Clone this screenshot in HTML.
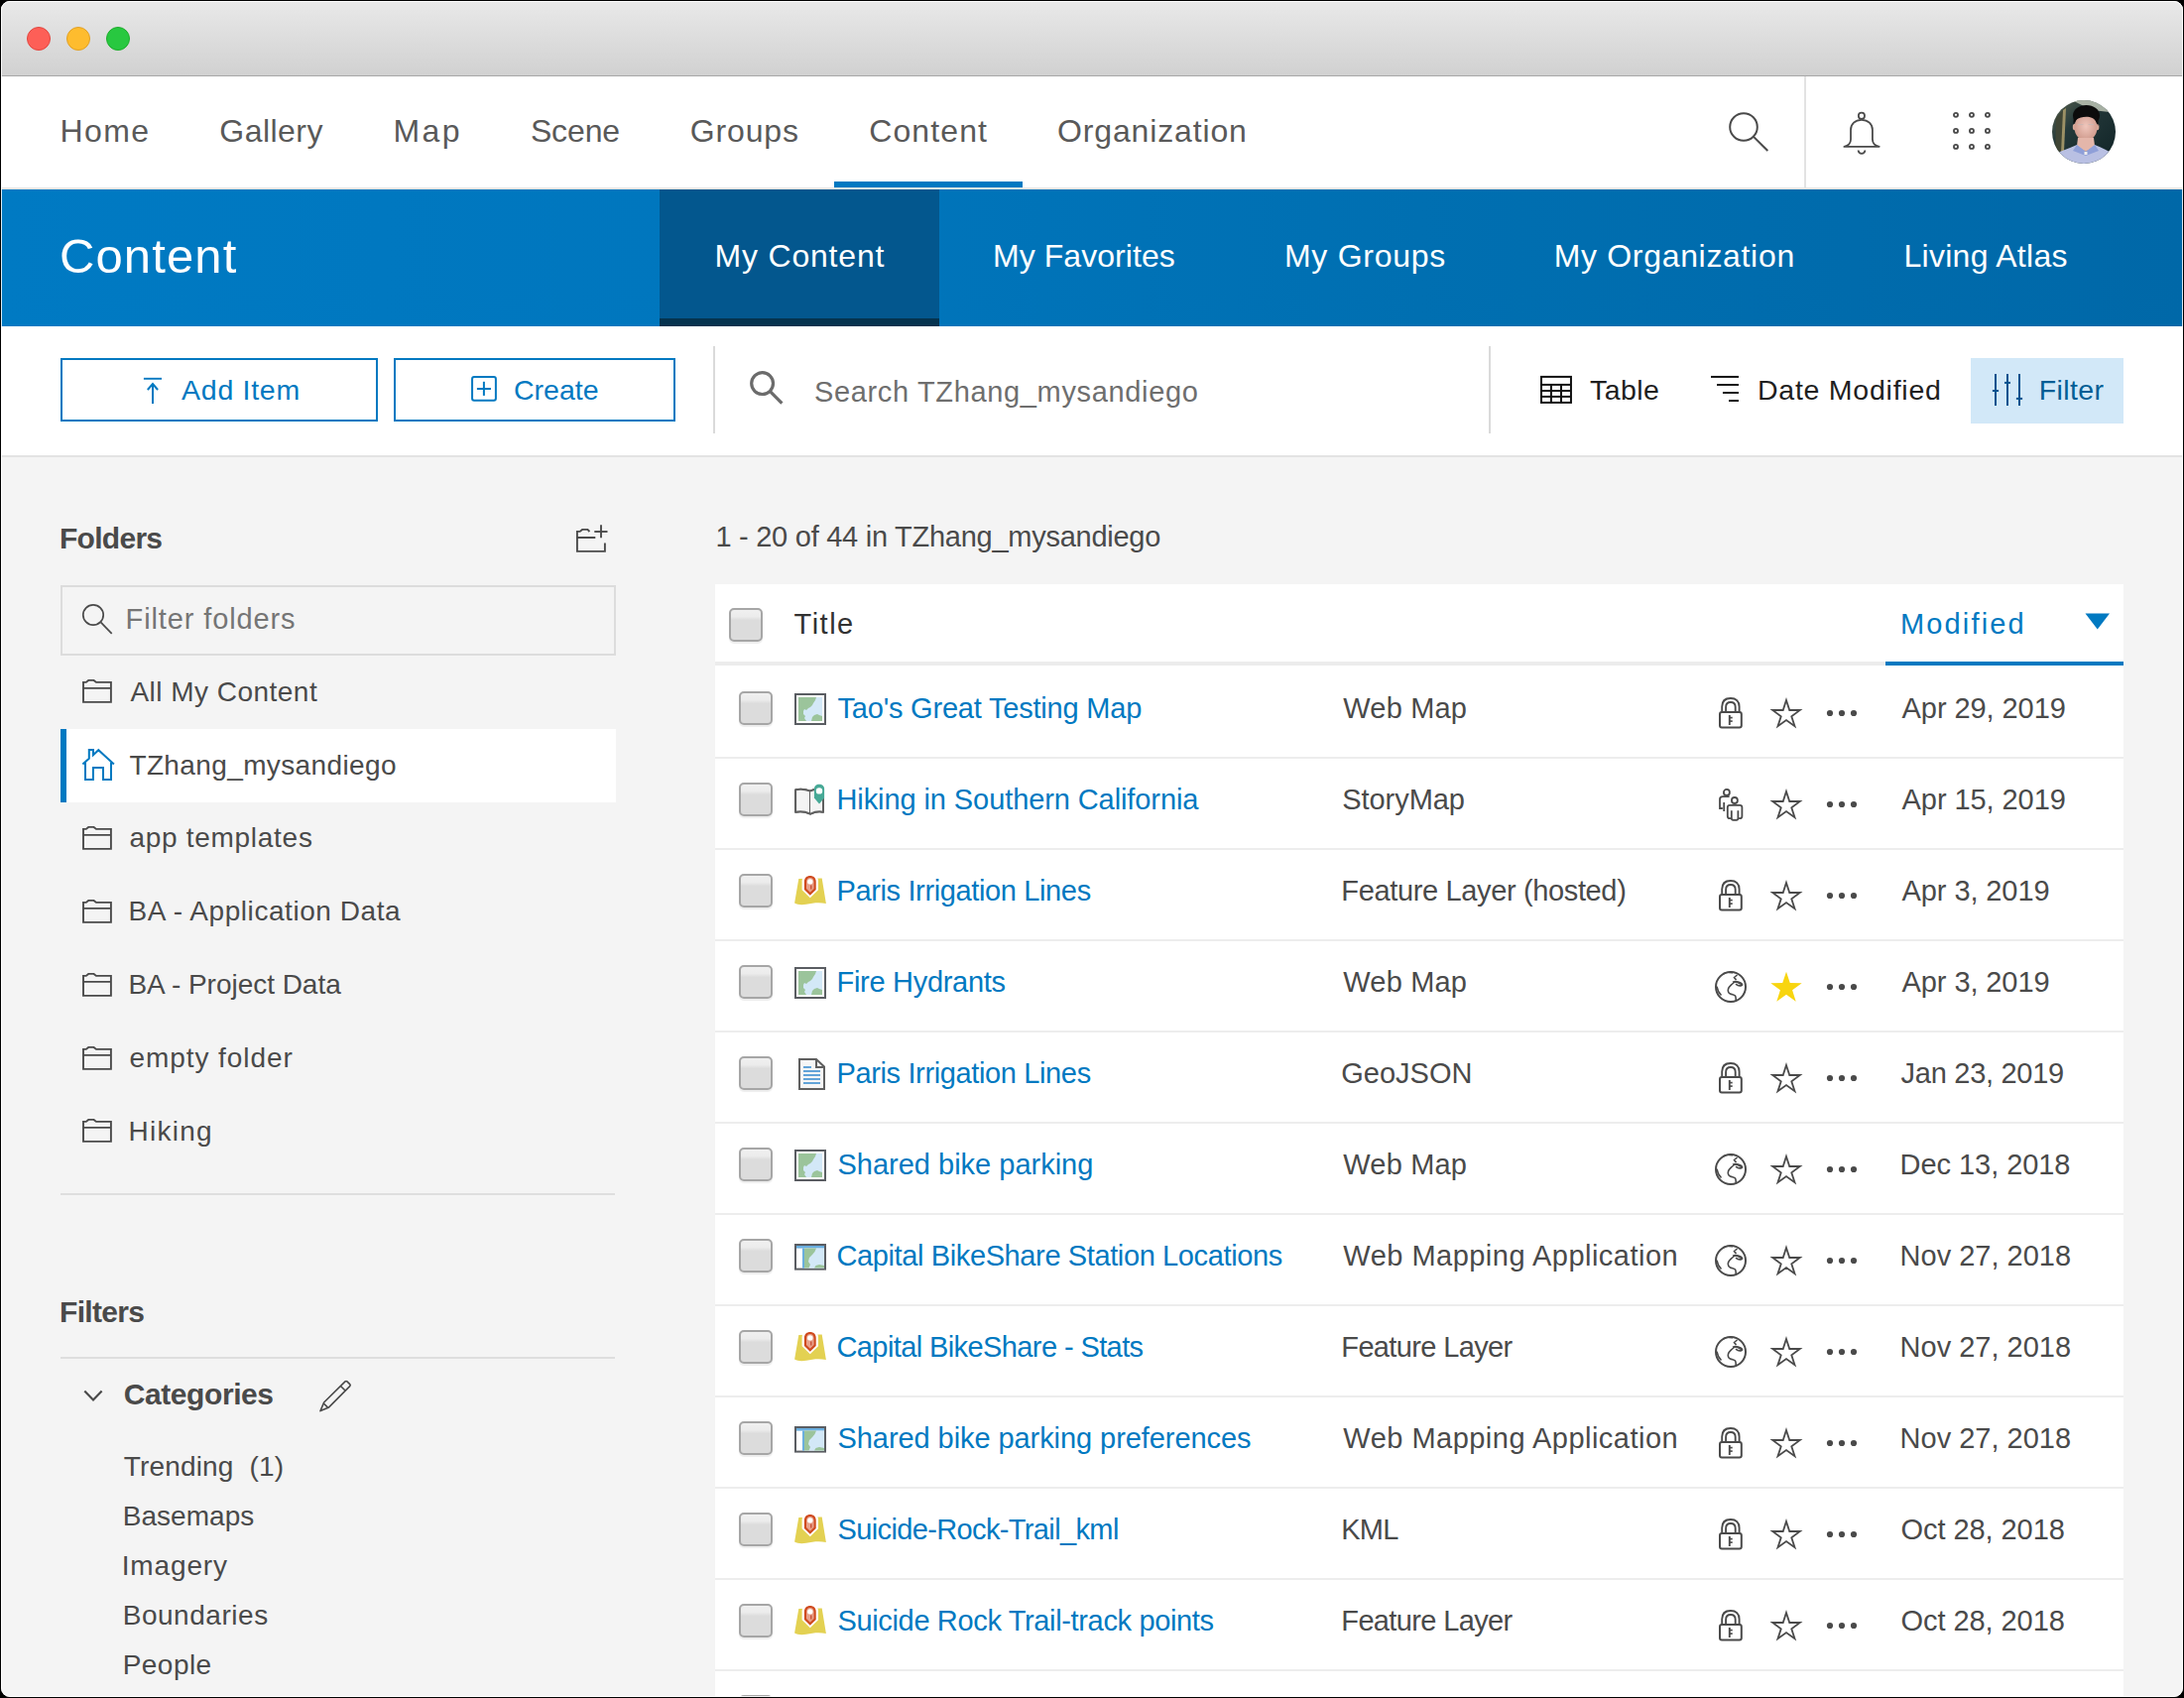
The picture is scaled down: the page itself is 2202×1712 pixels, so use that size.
<!DOCTYPE html>
<html><head><meta charset='utf-8'><style>
html,body{margin:0;padding:0;width:2202px;height:1712px;overflow:hidden;background:#000}
#win{position:absolute;left:1px;top:1px;width:2200px;height:1710px;border-radius:9px;overflow:hidden;background:#f4f4f4}
#c{position:absolute;left:-1px;top:-1px;width:2202px;height:1712px}
.t{position:absolute;font-family:"Liberation Sans", sans-serif;line-height:1;white-space:pre}
.i{position:absolute;overflow:visible}
.cb{position:absolute;width:29.5px;height:29.5px;border:2px solid #a6a6a6;border-radius:5px;background:linear-gradient(#f0f0f0,#ececec 22%,#dcdcdc 34%,#dcdcdc);box-shadow:0 1.5px 1px rgba(0,0,0,0.07)}
</style></head><body>
<div id='win'><div id='c'>
<div style='position:absolute;left:0px;top:0px;width:2202px;height:76px;background:linear-gradient(#e9e9e9,#d1d1d1);'></div><div style='position:absolute;left:0px;top:76px;width:2202px;height:1px;background:#a8a8a8;'></div><div style='position:absolute;left:27px;top:27px;width:22px;height:22px;border-radius:50%;background:#fd5f57;border:1px solid #e2463f'></div><div style='position:absolute;left:67px;top:27px;width:22px;height:22px;border-radius:50%;background:#febc2e;border:1px solid #e1a024'></div><div style='position:absolute;left:107px;top:27px;width:22px;height:22px;border-radius:50%;background:#28c840;border:1px solid #1dad2b'></div><div style='position:absolute;left:0px;top:77px;width:2202px;height:112px;background:#fff;'></div><div style='position:absolute;left:0px;top:189px;width:2202px;height:2px;background:#e8e6e4;'></div><div style='position:absolute;left:841px;top:183px;width:190px;height:6px;background:#0079c1;'></div><div style='position:absolute;left:1819px;top:77px;width:2px;height:112px;background:#e3e3e3;'></div><div style='position:absolute;left:0px;top:191px;width:2202px;height:138px;background:linear-gradient(90deg,#007ac3 0%,#0076bd 35%,#006fb1 65%,#0068a8 100%);'></div><div style='position:absolute;left:665px;top:191px;width:282px;height:130px;background:#03578e;'></div><div style='position:absolute;left:665px;top:321px;width:282px;height:8px;background:#05334f;'></div><div style='position:absolute;left:0px;top:329px;width:2202px;height:130px;background:#fff;'></div><div style='position:absolute;left:0px;top:459px;width:2202px;height:2px;background:#e3e3e3;'></div><div style='position:absolute;left:61px;top:361px;width:316px;height:60px;border:2px solid #0079c1'></div><div style='position:absolute;left:397px;top:361px;width:280px;height:60px;border:2px solid #0079c1'></div><div style='position:absolute;left:719px;top:349px;width:2px;height:88px;background:#dadada;'></div><div style='position:absolute;left:1501px;top:349px;width:2px;height:88px;background:#dadada;'></div><div style='position:absolute;left:61px;top:590px;width:556px;height:67px;border:2px solid #dcdcdc'></div><div style='position:absolute;left:61px;top:735px;width:560px;height:74px;background:#fff;'></div><div style='position:absolute;left:61px;top:735px;width:6px;height:74px;background:#0079c1;'></div><div style='position:absolute;left:61px;top:1203px;width:559px;height:2px;background:#dedede;'></div><div style='position:absolute;left:61px;top:1368px;width:559px;height:2px;background:#dedede;'></div><div style='position:absolute;left:721px;top:589px;width:1420px;height:1130px;background:#fff;'></div><div style='position:absolute;left:721px;top:667px;width:1420px;height:4px;background:#ececec;'></div><div style='position:absolute;left:1901px;top:667px;width:240px;height:4px;background:#0079c1;'></div><div style='position:absolute;left:721px;top:763px;width:1420px;height:2px;background:#ededed;'></div><div style='position:absolute;left:721px;top:855px;width:1420px;height:2px;background:#ededed;'></div><div style='position:absolute;left:721px;top:947px;width:1420px;height:2px;background:#ededed;'></div><div style='position:absolute;left:721px;top:1039px;width:1420px;height:2px;background:#ededed;'></div><div style='position:absolute;left:721px;top:1131px;width:1420px;height:2px;background:#ededed;'></div><div style='position:absolute;left:721px;top:1223px;width:1420px;height:2px;background:#ededed;'></div><div style='position:absolute;left:721px;top:1315px;width:1420px;height:2px;background:#ededed;'></div><div style='position:absolute;left:721px;top:1407px;width:1420px;height:2px;background:#ededed;'></div><div style='position:absolute;left:721px;top:1499px;width:1420px;height:2px;background:#ededed;'></div><div style='position:absolute;left:721px;top:1591px;width:1420px;height:2px;background:#ededed;'></div><div style='position:absolute;left:721px;top:1683px;width:1420px;height:2px;background:#ededed;'></div>
<svg class='i' style='left:1730px;top:100px' width='60' height='60' viewBox='0 0 60 60'><circle cx='28' cy='28' r='13.8' fill='none' stroke='#4a4a4a' stroke-width='2'/><line x1='37.8' y1='37.6' x2='52.3' y2='52' stroke='#4a4a4a' stroke-width='2'/></svg><svg class='i' style='left:1850px;top:105px' width='55' height='55' viewBox='0 0 55 55'><circle cx='26.9' cy='11.7' r='3.1' fill='none' stroke='#4a4a4a' stroke-width='1.8'/><path d='M9.4 42.9 C12.5 42.2 16 40 16 35.6 V25.9 C16 20 20.5 15.9 26.9 15.9 C33.3 15.9 37.9 20 37.9 25.9 V35.6 C37.9 40 41.5 42.2 44.7 42.9 Z' fill='none' stroke='#4a4a4a' stroke-width='1.8' stroke-linejoin='round'/><path d='M23.6 46.4 A3.4 3.4 0 0 0 30.4 46.4' fill='none' stroke='#4a4a4a' stroke-width='1.8'/></svg><svg class='i' style='left:1960px;top:105px' width='55' height='55' viewBox='0 0 55 55'><circle cx='12' cy='10.85' r='2.05' fill='none' stroke='#4a4a4a' stroke-width='1.8'/><circle cx='12' cy='26.9' r='2.05' fill='none' stroke='#4a4a4a' stroke-width='1.8'/><circle cx='12' cy='42.9' r='2.05' fill='none' stroke='#4a4a4a' stroke-width='1.8'/><circle cx='27.95' cy='10.85' r='2.05' fill='none' stroke='#4a4a4a' stroke-width='1.8'/><circle cx='27.95' cy='26.9' r='2.05' fill='none' stroke='#4a4a4a' stroke-width='1.8'/><circle cx='27.95' cy='42.9' r='2.05' fill='none' stroke='#4a4a4a' stroke-width='1.8'/><circle cx='43.95' cy='10.85' r='2.05' fill='none' stroke='#4a4a4a' stroke-width='1.8'/><circle cx='43.95' cy='26.9' r='2.05' fill='none' stroke='#4a4a4a' stroke-width='1.8'/><circle cx='43.95' cy='42.9' r='2.05' fill='none' stroke='#4a4a4a' stroke-width='1.8'/></svg><svg class='i' style='left:2069px;top:101px' width='64' height='64' viewBox='0 0 64 64'><defs><clipPath id='av'><circle cx='32' cy='32' r='32'/></clipPath><linearGradient id='avbg' x1='0' y1='0' x2='1' y2='1'><stop offset='0' stop-color='#5d6450'/><stop offset='0.35' stop-color='#24393a'/><stop offset='1' stop-color='#102226'/></linearGradient><radialGradient id='avf' cx='0.5' cy='0.45' r='0.55'><stop offset='0' stop-color='#f0c7bd'/><stop offset='1' stop-color='#cf9a8c'/></radialGradient></defs><g clip-path='url(#av)'><rect width='64' height='64' fill='url(#avbg)'/><path d='M20 0 H52 L58 12 L40 10 Z' fill='#c9cfbf' opacity='0.8'/><path d='M4 18 L13 8 L11 50 L3 56 Z' fill='#3f4535'/><path d='M11 10 L14 8 L12 52 L9 54 Z' fill='#9c9166'/><ellipse cx='34.5' cy='15.5' rx='13.5' ry='10.5' fill='#0c0c0c'/><ellipse cx='22.6' cy='27' rx='1.8' ry='3.2' fill='#d9a898'/><ellipse cx='45.6' cy='27' rx='1.8' ry='3.2' fill='#d9a898'/><ellipse cx='34' cy='27.5' rx='11.5' ry='13.5' fill='url(#avf)'/><path d='M21.5 25 C21 12 27 6 35 6.5 C43 7 47.5 13 46.5 26 L44.5 22 C42 16 31 15 24 20 Z' fill='#0c0c0c'/><path d='M26 24.5 H31.5 M36.5 24.5 H42' stroke='#c9b8b4' stroke-width='1' opacity='0.8'/><path d='M26 38 H42 L43 46 L34 52 L25 46 Z' fill='#e4b6aa'/><path d='M-2 64 L-2 57 C6 52 16 49 25 45 L34 52 L43 45 C51 48 58 52 66 57 V64 Z' fill='#b9c0e3'/><path d='M25 45 L21 51 L34 56 L47 51 L43 45 L34 52 Z' fill='#8f9fd8'/><rect x='32.5' y='52' width='3' height='3' fill='#eee'/></g></svg><svg class='i' style='left:130px;top:360px' width='40' height='60' viewBox='0 0 40 60'><line x1='14.9' y1='21.8' x2='33' y2='21.8' stroke='#0079c1' stroke-width='1.9'/><line x1='24' y1='28' x2='24' y2='47' stroke='#0079c1' stroke-width='2'/><path d='M18.8 33 L24 27 L29.1 33' fill='none' stroke='#0079c1' stroke-width='2'/></svg><svg class='i' style='left:465px;top:370px' width='45' height='45' viewBox='0 0 45 45'><rect x='11.07' y='10' width='23.83' height='23.85' rx='2' fill='none' stroke='#0079c1' stroke-width='2'/><line x1='22.9' y1='14.8' x2='22.9' y2='28.9' stroke='#0079c1' stroke-width='2'/><line x1='15.9' y1='22' x2='29.95' y2='22' stroke='#0079c1' stroke-width='2'/></svg><svg class='i' style='left:745px;top:365px' width='55' height='50' viewBox='0 0 55 50'><circle cx='23.6' cy='21.6' r='10.9' fill='none' stroke='#6b6b6b' stroke-width='3.2'/><line x1='31.5' y1='29.6' x2='43.4' y2='41.6' stroke='#6b6b6b' stroke-width='3.2'/></svg><svg class='i' style='left:1545px;top:370px' width='50' height='45' viewBox='0 0 50 45'><rect x='9' y='9.9' width='29.95' height='26' fill='none' stroke='#111' stroke-width='2'/><line x1='9' y1='17.9' x2='38.95' y2='17.9' stroke='#111' stroke-width='2'/><line x1='9' y1='24' x2='38.95' y2='24' stroke='#111' stroke-width='2'/><line x1='9' y1='29.9' x2='38.95' y2='29.9' stroke='#111' stroke-width='2'/><line x1='18.9' y1='17.9' x2='18.9' y2='35.9' stroke='#111' stroke-width='2'/><line x1='29' y1='17.9' x2='29' y2='35.9' stroke='#111' stroke-width='2'/></svg><svg class='i' style='left:1718px;top:370px' width='45' height='45' viewBox='0 0 45 45'><line x1='7' y1='9.94' x2='35' y2='9.94' stroke='#111' stroke-width='2'/><line x1='13' y1='17.97' x2='35' y2='17.97' stroke='#111' stroke-width='2'/><line x1='18.95' y1='25.97' x2='35' y2='25.97' stroke='#111' stroke-width='2'/><line x1='25' y1='33.98' x2='35' y2='33.98' stroke='#111' stroke-width='2'/></svg><div style='position:absolute;left:1987px;top:361px;width:154px;height:66px;background:#d2e8f8;'></div><svg class='i' style='left:2000px;top:370px' width='45' height='45' viewBox='0 0 45 45'><line x1='12' y1='7' x2='12' y2='39' stroke='#00528e' stroke-width='2'/><line x1='24' y1='7' x2='24' y2='39' stroke='#00528e' stroke-width='2'/><line x1='36' y1='7' x2='36' y2='39' stroke='#00528e' stroke-width='2'/><line x1='8.9' y1='24' x2='15.1' y2='24' stroke='#00528e' stroke-width='2'/><line x1='21' y1='15.9' x2='27' y2='15.9' stroke='#00528e' stroke-width='2'/><line x1='32.9' y1='31.9' x2='39.1' y2='31.9' stroke='#00528e' stroke-width='2'/></svg><svg class='i' style='left:572px;top:522px' width='48' height='40' viewBox='0 0 48 40'><path d='M9.9 20 H28.3 M37.9 25.5 V33.9 H9.9 V13.9 H12.7 L15.07 11.9 H20.5 L22.4 14' fill='none' stroke='#4a4a4a' stroke-width='1.9'/><line x1='34' y1='7.3' x2='34' y2='20.25' stroke='#4a4a4a' stroke-width='1.9'/><line x1='27.3' y1='14' x2='40.5' y2='14' stroke='#4a4a4a' stroke-width='1.9'/></svg><svg class='i' style='left:78px;top:600px' width='42' height='45' viewBox='0 0 42 45'><circle cx='16' cy='20' r='10.2' fill='none' stroke='#4a4a4a' stroke-width='1.7'/><line x1='23.6' y1='27.4' x2='34.7' y2='38.95' stroke='#4a4a4a' stroke-width='1.7'/></svg><svg class='i' style='left:76px;top:676.0px' width='48' height='40' viewBox='0 0 48 40'><path d='M8 31.9 V11.9 H10.8 L13.2 9.9 H18.6 L21 11.9 H35.9 V31.9 Z M8 17.9 H35.9' fill='none' stroke='#4a4a4a' stroke-width='1.9'/></svg><svg class='i' style='left:76px;top:823.8px' width='48' height='40' viewBox='0 0 48 40'><path d='M8 31.9 V11.9 H10.8 L13.2 9.9 H18.6 L21 11.9 H35.9 V31.9 Z M8 17.9 H35.9' fill='none' stroke='#4a4a4a' stroke-width='1.9'/></svg><svg class='i' style='left:76px;top:897.7px' width='48' height='40' viewBox='0 0 48 40'><path d='M8 31.9 V11.9 H10.8 L13.2 9.9 H18.6 L21 11.9 H35.9 V31.9 Z M8 17.9 H35.9' fill='none' stroke='#4a4a4a' stroke-width='1.9'/></svg><svg class='i' style='left:76px;top:971.6px' width='48' height='40' viewBox='0 0 48 40'><path d='M8 31.9 V11.9 H10.8 L13.2 9.9 H18.6 L21 11.9 H35.9 V31.9 Z M8 17.9 H35.9' fill='none' stroke='#4a4a4a' stroke-width='1.9'/></svg><svg class='i' style='left:76px;top:1045.5px' width='48' height='40' viewBox='0 0 48 40'><path d='M8 31.9 V11.9 H10.8 L13.2 9.9 H18.6 L21 11.9 H35.9 V31.9 Z M8 17.9 H35.9' fill='none' stroke='#4a4a4a' stroke-width='1.9'/></svg><svg class='i' style='left:76px;top:1119.4px' width='48' height='40' viewBox='0 0 48 40'><path d='M8 31.9 V11.9 H10.8 L13.2 9.9 H18.6 L21 11.9 H35.9 V31.9 Z M8 17.9 H35.9' fill='none' stroke='#4a4a4a' stroke-width='1.9'/></svg><svg class='i' style='left:76px;top:746px' width='48' height='50' viewBox='0 0 48 50'><path d='M7.4 24.6 L13.8 18.8 V10 H18 V15.2 L23.3 10.2 L38.9 24.6' fill='none' stroke='#0079c1' stroke-width='2' stroke-linejoin='miter'/><path d='M10 22.6 V39.9 H17.9 V28.1 H28 V39.9 H36 V22.6' fill='none' stroke='#0079c1' stroke-width='2'/></svg><svg class='i' style='left:78px;top:1390px' width='35' height='35' viewBox='0 0 35 35'><path d='M7.3 12.6 L16 21.5 L24.6 12.6' fill='none' stroke='#4a4a4a' stroke-width='2.2'/></svg><svg class='i' style='left:310px;top:1385px' width='50' height='45' viewBox='0 0 50 45'><path d='M13 37.6 L16.6 29 L38 7.9 C38.6 7.3 39.4 7.3 40 7.9 L42.7 10.6 C43.3 11.2 43.3 12 42.7 12.6 L21.6 33.9 Z M33.5 12.5 L38.3 17.3 M16.6 30.2 L20.3 33.9' fill='none' stroke='#4a4a4a' stroke-width='1.6' stroke-linejoin='round'/></svg><svg class='i' style='left:2095px;top:612px' width='40' height='30' viewBox='0 0 40 30'><path d='M7.5 6.4 H32 L19.75 22.5 Z' fill='#0079c1'/></svg><div class='cb' style='left:735px;top:613px'></div><div class='cb' style='left:745px;top:697px'></div><svg class='i' style='left:801px;top:699px' width='32' height='32' viewBox='0 0 32 32'><rect x='1' y='1' width='30' height='30' fill='#fff' stroke='#5a5d62' stroke-width='2'/><rect x='4' y='4' width='24' height='24' fill='#d3e8f7'/><path d='M4 4 H22 L21 7 L19 10 L18 12 L16 14 L14 15 L12 17 L10 16 L9 18 L9 21 L11 23 L10 25 L12 28 H4 Z' fill='#9bc49b'/><path d='M17 28 L18 24 L20 22 L23 21 L25 22 L28 23 V28 Z' fill='#9bc49b'/></svg><svg class='i' style='left:1733px;top:703px' width='26' height='33' viewBox='0 0 26 33'><rect x='1' y='15' width='21.8' height='15.6' rx='2' fill='none' stroke='#4a4a4a' stroke-width='2'/><path d='M3.2 15 V9.5 C3.2 4 6.6 1 11.9 1 C17.2 1 20.6 4 20.6 9.5 V15 M7.1 15 V10 C7.1 6.8 9.2 5 11.9 5 C14.6 5 16.7 6.8 16.7 10 V15' fill='none' stroke='#4a4a4a' stroke-width='1.9'/><line x1='10.8' y1='18' x2='10.8' y2='28' stroke='#4a4a4a' stroke-width='1.9'/><line x1='10.8' y1='20.6' x2='13.7' y2='20.6' stroke='#4a4a4a' stroke-width='1.7'/><line x1='10.8' y1='24.1' x2='13.7' y2='24.1' stroke='#4a4a4a' stroke-width='1.7'/></svg><svg class='i' style='left:1785px;top:703px' width='33' height='33' viewBox='0 0 33 33'><path d='M16.00 3.00 L19.26 13.01 L29.79 13.02 L21.28 19.22 L24.52 29.23 L16.00 23.05 L7.48 29.23 L10.72 19.22 L2.21 13.02 L12.74 13.01 Z' fill='none' stroke='#4a4a4a' stroke-width='1.8' stroke-linejoin='miter' stroke-miterlimit='10'/></svg><svg class='i' style='left:1838px;top:711px' width='40' height='10' viewBox='0 0 40 10'><circle cx='7' cy='8' r='3.1' fill='#4a4a4a'/><circle cx='19' cy='8' r='3.1' fill='#4a4a4a'/><circle cx='31' cy='8' r='3.1' fill='#4a4a4a'/></svg><div class='cb' style='left:745px;top:789px'></div><svg class='i' style='left:801px;top:789px' width='32' height='36' viewBox='0 0 32 36'><path d='M1.1 7.2 C6 6.2 11.5 6.8 16 8.6 C18 7.6 19.5 7.2 20.5 7 M29 17 V29.8 C25 28.6 20.5 29.5 16 31.6 C11.5 29.5 6 28.6 1.1 29.8 Z M1.1 7.2 V29.8' fill='#f4f4f4' stroke='#5f5f5f' stroke-width='2' stroke-linejoin='round'/><path d='M1.1 7.2 C6 6.2 11.5 6.8 16 8.6 V31.6 C11.5 29.5 6 28.6 1.1 29.8 Z' fill='#f4f4f4' stroke='#5f5f5f' stroke-width='2' stroke-linejoin='round'/><path d='M16 8.6 C18 7.6 19.5 7.2 21 7 V16 H29 V29.8 C25 28.6 20.5 29.5 16 31.6 Z' fill='#f4f4f4' stroke='none'/><path d='M16 8.6 C18 7.6 19.5 7.2 21 7 M29 16 V29.8 C25 28.6 20.5 29.5 16 31.6' fill='none' stroke='#5f5f5f' stroke-width='2' stroke-linejoin='round'/><path d='M25 21.5 L19.9 15.5 V6.5 C19.9 3.5 22 1.7 25 1.7 C28 1.7 30.1 3.5 30.1 6.5 V15.5 Z' fill='#47a996'/><circle cx='25' cy='8.4' r='3.2' fill='#fff'/></svg><svg class='i' style='left:1733px;top:795px' width='26' height='34' viewBox='0 0 26 34'><circle cx='7.9' cy='3.9' r='3' fill='none' stroke='#4a4a4a' stroke-width='1.8'/><path d='M10.6 8.2 H4 C2.3 8.2 1 9.3 1 11 V20 H3.8 M5.2 14 V23' fill='none' stroke='#4a4a4a' stroke-width='1.8'/><circle cx='15.9' cy='12' r='3' fill='none' stroke='#4a4a4a' stroke-width='1.8'/><path d='M12.6 30.2 H11 C9.8 30.2 8.8 29.2 8.8 28 V19.1 C8.8 17.9 9.8 16.9 11 16.9 H21.2 C22.4 16.9 23.4 17.9 23.4 19.1 V28 C23.4 29.2 22.4 30.2 21.2 30.2 H19.4 M12.8 22.3 V30 C12.8 31 13.5 31.8 14.5 31.8 H17.7 C18.7 31.8 19.4 31 19.4 30 V22.3' fill='none' stroke='#4a4a4a' stroke-width='1.8'/></svg><svg class='i' style='left:1785px;top:795px' width='33' height='33' viewBox='0 0 33 33'><path d='M16.00 3.00 L19.26 13.01 L29.79 13.02 L21.28 19.22 L24.52 29.23 L16.00 23.05 L7.48 29.23 L10.72 19.22 L2.21 13.02 L12.74 13.01 Z' fill='none' stroke='#4a4a4a' stroke-width='1.8' stroke-linejoin='miter' stroke-miterlimit='10'/></svg><svg class='i' style='left:1838px;top:803px' width='40' height='10' viewBox='0 0 40 10'><circle cx='7' cy='8' r='3.1' fill='#4a4a4a'/><circle cx='19' cy='8' r='3.1' fill='#4a4a4a'/><circle cx='31' cy='8' r='3.1' fill='#4a4a4a'/></svg><div class='cb' style='left:745px;top:881px'></div><svg class='i' style='left:801px;top:882px' width='32' height='32' viewBox='0 0 32 32'><path d='M4.3 4 L27.7 3.4 L31.9 28.9 C24 27.6 18 28.6 12 29.8 C7 30.6 3 30.2 0.1 28.6 Z' fill='#e3d152'/><path d='M15.8 23.2 L7.6 15.2 V6.6 C7.6 1.6 11.4 -1.2 15.8 -1.2 C20.2 -1.2 24 1.6 24 6.6 V15.2 Z' fill='#fff'/><path d='M15.8 20.8 L9.9 15 V6.8 C9.9 3 12.5 0.9 15.8 0.9 C19.1 0.9 21.7 3 21.7 6.8 V15 Z' fill='#cf4a1f'/><path d='M15.8 17.8 L12 14 V7.2 C12 4.6 13.6 3 15.8 3 C18 3 19.6 4.6 19.6 7.2 V14 Z' fill='#e8a08a'/><circle cx='15.8' cy='6.9' r='2.7' fill='#fff'/><rect x='16.2' y='10.5' width='1.2' height='4' fill='#c4452a'/></svg><svg class='i' style='left:1733px;top:887px' width='26' height='33' viewBox='0 0 26 33'><rect x='1' y='15' width='21.8' height='15.6' rx='2' fill='none' stroke='#4a4a4a' stroke-width='2'/><path d='M3.2 15 V9.5 C3.2 4 6.6 1 11.9 1 C17.2 1 20.6 4 20.6 9.5 V15 M7.1 15 V10 C7.1 6.8 9.2 5 11.9 5 C14.6 5 16.7 6.8 16.7 10 V15' fill='none' stroke='#4a4a4a' stroke-width='1.9'/><line x1='10.8' y1='18' x2='10.8' y2='28' stroke='#4a4a4a' stroke-width='1.9'/><line x1='10.8' y1='20.6' x2='13.7' y2='20.6' stroke='#4a4a4a' stroke-width='1.7'/><line x1='10.8' y1='24.1' x2='13.7' y2='24.1' stroke='#4a4a4a' stroke-width='1.7'/></svg><svg class='i' style='left:1785px;top:887px' width='33' height='33' viewBox='0 0 33 33'><path d='M16.00 3.00 L19.26 13.01 L29.79 13.02 L21.28 19.22 L24.52 29.23 L16.00 23.05 L7.48 29.23 L10.72 19.22 L2.21 13.02 L12.74 13.01 Z' fill='none' stroke='#4a4a4a' stroke-width='1.8' stroke-linejoin='miter' stroke-miterlimit='10'/></svg><svg class='i' style='left:1838px;top:895px' width='40' height='10' viewBox='0 0 40 10'><circle cx='7' cy='8' r='3.1' fill='#4a4a4a'/><circle cx='19' cy='8' r='3.1' fill='#4a4a4a'/><circle cx='31' cy='8' r='3.1' fill='#4a4a4a'/></svg><div class='cb' style='left:745px;top:973px'></div><svg class='i' style='left:801px;top:975px' width='32' height='32' viewBox='0 0 32 32'><rect x='1' y='1' width='30' height='30' fill='#fff' stroke='#5a5d62' stroke-width='2'/><rect x='4' y='4' width='24' height='24' fill='#d3e8f7'/><path d='M4 4 H22 L21 7 L19 10 L18 12 L16 14 L14 15 L12 17 L10 16 L9 18 L9 21 L11 23 L10 25 L12 28 H4 Z' fill='#9bc49b'/><path d='M17 28 L18 24 L20 22 L23 21 L25 22 L28 23 V28 Z' fill='#9bc49b'/></svg><svg class='i' style='left:1729px;top:979px' width='33' height='33' viewBox='0 0 33 33'><circle cx='16' cy='16' r='15' fill='none' stroke='#4a4a4a' stroke-width='2'/><path d='M22.5 4 L19.5 6.5 L21.5 9 M27 13.5 C25 12.5 23 11 21 11 C19.5 11 18.5 12 17 13.5 C15.5 15 14 16 13.5 18 C13 20 13.5 22 15.5 23 C17.5 24 19.5 23.5 20.5 25 C21.5 26.5 21 28.5 21.3 30.2 M2 15.5 C2.5 19 4 22 6.5 24.5' fill='none' stroke='#4a4a4a' stroke-width='1.6'/><path d='M18 11.2 C20.5 10 23.5 10.5 26 12 C27.8 13 28 14 27 14.5 C25.5 15.2 23 14.8 21 13.2' fill='none' stroke='#4a4a4a' stroke-width='1.6'/><path d='M8 2.8 L11 2 M14.5 1.4 L18 1.6' fill='none' stroke='#4a4a4a' stroke-width='1.6'/></svg><svg class='i' style='left:1785px;top:979px' width='33' height='33' viewBox='0 0 33 33'><path d='M16.00 0.80 L19.76 12.12 L31.69 12.20 L22.09 19.28 L25.70 30.65 L16.00 23.70 L6.30 30.65 L9.91 19.28 L0.31 12.20 L12.24 12.12 Z' fill='#f8d50f'/></svg><svg class='i' style='left:1838px;top:987px' width='40' height='10' viewBox='0 0 40 10'><circle cx='7' cy='8' r='3.1' fill='#4a4a4a'/><circle cx='19' cy='8' r='3.1' fill='#4a4a4a'/><circle cx='31' cy='8' r='3.1' fill='#4a4a4a'/></svg><div class='cb' style='left:745px;top:1065px'></div><svg class='i' style='left:801px;top:1067px' width='32' height='32' viewBox='0 0 32 32'><path d='M5 1 H22 L30 8.5 V31 H5 Z' fill='#f6f6f6' stroke='#5f5f5f' stroke-width='2'/><path d='M22 1 V9 H30' fill='none' stroke='#5f5f5f' stroke-width='2'/><line x1='9' y1='9' x2='17' y2='9' stroke='#3d8fd1' stroke-width='1.6'/><line x1='9' y1='13' x2='26' y2='13' stroke='#3d8fd1' stroke-width='1.6'/><line x1='9' y1='17' x2='26' y2='17' stroke='#3d8fd1' stroke-width='1.6'/><line x1='9' y1='21' x2='26' y2='21' stroke='#3d8fd1' stroke-width='1.6'/><line x1='9' y1='25' x2='26' y2='25' stroke='#3d8fd1' stroke-width='1.6'/></svg><svg class='i' style='left:1733px;top:1071px' width='26' height='33' viewBox='0 0 26 33'><rect x='1' y='15' width='21.8' height='15.6' rx='2' fill='none' stroke='#4a4a4a' stroke-width='2'/><path d='M3.2 15 V9.5 C3.2 4 6.6 1 11.9 1 C17.2 1 20.6 4 20.6 9.5 V15 M7.1 15 V10 C7.1 6.8 9.2 5 11.9 5 C14.6 5 16.7 6.8 16.7 10 V15' fill='none' stroke='#4a4a4a' stroke-width='1.9'/><line x1='10.8' y1='18' x2='10.8' y2='28' stroke='#4a4a4a' stroke-width='1.9'/><line x1='10.8' y1='20.6' x2='13.7' y2='20.6' stroke='#4a4a4a' stroke-width='1.7'/><line x1='10.8' y1='24.1' x2='13.7' y2='24.1' stroke='#4a4a4a' stroke-width='1.7'/></svg><svg class='i' style='left:1785px;top:1071px' width='33' height='33' viewBox='0 0 33 33'><path d='M16.00 3.00 L19.26 13.01 L29.79 13.02 L21.28 19.22 L24.52 29.23 L16.00 23.05 L7.48 29.23 L10.72 19.22 L2.21 13.02 L12.74 13.01 Z' fill='none' stroke='#4a4a4a' stroke-width='1.8' stroke-linejoin='miter' stroke-miterlimit='10'/></svg><svg class='i' style='left:1838px;top:1079px' width='40' height='10' viewBox='0 0 40 10'><circle cx='7' cy='8' r='3.1' fill='#4a4a4a'/><circle cx='19' cy='8' r='3.1' fill='#4a4a4a'/><circle cx='31' cy='8' r='3.1' fill='#4a4a4a'/></svg><div class='cb' style='left:745px;top:1157px'></div><svg class='i' style='left:801px;top:1159px' width='32' height='32' viewBox='0 0 32 32'><rect x='1' y='1' width='30' height='30' fill='#fff' stroke='#5a5d62' stroke-width='2'/><rect x='4' y='4' width='24' height='24' fill='#d3e8f7'/><path d='M4 4 H22 L21 7 L19 10 L18 12 L16 14 L14 15 L12 17 L10 16 L9 18 L9 21 L11 23 L10 25 L12 28 H4 Z' fill='#9bc49b'/><path d='M17 28 L18 24 L20 22 L23 21 L25 22 L28 23 V28 Z' fill='#9bc49b'/></svg><svg class='i' style='left:1729px;top:1163px' width='33' height='33' viewBox='0 0 33 33'><circle cx='16' cy='16' r='15' fill='none' stroke='#4a4a4a' stroke-width='2'/><path d='M22.5 4 L19.5 6.5 L21.5 9 M27 13.5 C25 12.5 23 11 21 11 C19.5 11 18.5 12 17 13.5 C15.5 15 14 16 13.5 18 C13 20 13.5 22 15.5 23 C17.5 24 19.5 23.5 20.5 25 C21.5 26.5 21 28.5 21.3 30.2 M2 15.5 C2.5 19 4 22 6.5 24.5' fill='none' stroke='#4a4a4a' stroke-width='1.6'/><path d='M18 11.2 C20.5 10 23.5 10.5 26 12 C27.8 13 28 14 27 14.5 C25.5 15.2 23 14.8 21 13.2' fill='none' stroke='#4a4a4a' stroke-width='1.6'/><path d='M8 2.8 L11 2 M14.5 1.4 L18 1.6' fill='none' stroke='#4a4a4a' stroke-width='1.6'/></svg><svg class='i' style='left:1785px;top:1163px' width='33' height='33' viewBox='0 0 33 33'><path d='M16.00 3.00 L19.26 13.01 L29.79 13.02 L21.28 19.22 L24.52 29.23 L16.00 23.05 L7.48 29.23 L10.72 19.22 L2.21 13.02 L12.74 13.01 Z' fill='none' stroke='#4a4a4a' stroke-width='1.8' stroke-linejoin='miter' stroke-miterlimit='10'/></svg><svg class='i' style='left:1838px;top:1171px' width='40' height='10' viewBox='0 0 40 10'><circle cx='7' cy='8' r='3.1' fill='#4a4a4a'/><circle cx='19' cy='8' r='3.1' fill='#4a4a4a'/><circle cx='31' cy='8' r='3.1' fill='#4a4a4a'/></svg><div class='cb' style='left:745px;top:1249px'></div><svg class='i' style='left:801px;top:1254px' width='32' height='28' viewBox='0 0 32 28'><rect x='1' y='1' width='30' height='24.6' fill='#fff' stroke='#5a5d62' stroke-width='2'/><rect x='2' y='2' width='28' height='2.6' fill='#6aafe0'/><rect x='8' y='4.6' width='2' height='20' fill='#6aafe0'/><rect x='10' y='4.6' width='20' height='20' fill='#d3e8f7'/><path d='M10 4.6 H22 L20.5 8 L18 11 L15 14 L14 18 L16 21 L14.5 24.6 H10 Z' fill='#9bc49b'/><path d='M20 24.6 L21.5 22 L25 21 L30 22 V24.6 Z' fill='#9bc49b'/></svg><svg class='i' style='left:1729px;top:1255px' width='33' height='33' viewBox='0 0 33 33'><circle cx='16' cy='16' r='15' fill='none' stroke='#4a4a4a' stroke-width='2'/><path d='M22.5 4 L19.5 6.5 L21.5 9 M27 13.5 C25 12.5 23 11 21 11 C19.5 11 18.5 12 17 13.5 C15.5 15 14 16 13.5 18 C13 20 13.5 22 15.5 23 C17.5 24 19.5 23.5 20.5 25 C21.5 26.5 21 28.5 21.3 30.2 M2 15.5 C2.5 19 4 22 6.5 24.5' fill='none' stroke='#4a4a4a' stroke-width='1.6'/><path d='M18 11.2 C20.5 10 23.5 10.5 26 12 C27.8 13 28 14 27 14.5 C25.5 15.2 23 14.8 21 13.2' fill='none' stroke='#4a4a4a' stroke-width='1.6'/><path d='M8 2.8 L11 2 M14.5 1.4 L18 1.6' fill='none' stroke='#4a4a4a' stroke-width='1.6'/></svg><svg class='i' style='left:1785px;top:1255px' width='33' height='33' viewBox='0 0 33 33'><path d='M16.00 3.00 L19.26 13.01 L29.79 13.02 L21.28 19.22 L24.52 29.23 L16.00 23.05 L7.48 29.23 L10.72 19.22 L2.21 13.02 L12.74 13.01 Z' fill='none' stroke='#4a4a4a' stroke-width='1.8' stroke-linejoin='miter' stroke-miterlimit='10'/></svg><svg class='i' style='left:1838px;top:1263px' width='40' height='10' viewBox='0 0 40 10'><circle cx='7' cy='8' r='3.1' fill='#4a4a4a'/><circle cx='19' cy='8' r='3.1' fill='#4a4a4a'/><circle cx='31' cy='8' r='3.1' fill='#4a4a4a'/></svg><div class='cb' style='left:745px;top:1341px'></div><svg class='i' style='left:801px;top:1342px' width='32' height='32' viewBox='0 0 32 32'><path d='M4.3 4 L27.7 3.4 L31.9 28.9 C24 27.6 18 28.6 12 29.8 C7 30.6 3 30.2 0.1 28.6 Z' fill='#e3d152'/><path d='M15.8 23.2 L7.6 15.2 V6.6 C7.6 1.6 11.4 -1.2 15.8 -1.2 C20.2 -1.2 24 1.6 24 6.6 V15.2 Z' fill='#fff'/><path d='M15.8 20.8 L9.9 15 V6.8 C9.9 3 12.5 0.9 15.8 0.9 C19.1 0.9 21.7 3 21.7 6.8 V15 Z' fill='#cf4a1f'/><path d='M15.8 17.8 L12 14 V7.2 C12 4.6 13.6 3 15.8 3 C18 3 19.6 4.6 19.6 7.2 V14 Z' fill='#e8a08a'/><circle cx='15.8' cy='6.9' r='2.7' fill='#fff'/><rect x='16.2' y='10.5' width='1.2' height='4' fill='#c4452a'/></svg><svg class='i' style='left:1729px;top:1347px' width='33' height='33' viewBox='0 0 33 33'><circle cx='16' cy='16' r='15' fill='none' stroke='#4a4a4a' stroke-width='2'/><path d='M22.5 4 L19.5 6.5 L21.5 9 M27 13.5 C25 12.5 23 11 21 11 C19.5 11 18.5 12 17 13.5 C15.5 15 14 16 13.5 18 C13 20 13.5 22 15.5 23 C17.5 24 19.5 23.5 20.5 25 C21.5 26.5 21 28.5 21.3 30.2 M2 15.5 C2.5 19 4 22 6.5 24.5' fill='none' stroke='#4a4a4a' stroke-width='1.6'/><path d='M18 11.2 C20.5 10 23.5 10.5 26 12 C27.8 13 28 14 27 14.5 C25.5 15.2 23 14.8 21 13.2' fill='none' stroke='#4a4a4a' stroke-width='1.6'/><path d='M8 2.8 L11 2 M14.5 1.4 L18 1.6' fill='none' stroke='#4a4a4a' stroke-width='1.6'/></svg><svg class='i' style='left:1785px;top:1347px' width='33' height='33' viewBox='0 0 33 33'><path d='M16.00 3.00 L19.26 13.01 L29.79 13.02 L21.28 19.22 L24.52 29.23 L16.00 23.05 L7.48 29.23 L10.72 19.22 L2.21 13.02 L12.74 13.01 Z' fill='none' stroke='#4a4a4a' stroke-width='1.8' stroke-linejoin='miter' stroke-miterlimit='10'/></svg><svg class='i' style='left:1838px;top:1355px' width='40' height='10' viewBox='0 0 40 10'><circle cx='7' cy='8' r='3.1' fill='#4a4a4a'/><circle cx='19' cy='8' r='3.1' fill='#4a4a4a'/><circle cx='31' cy='8' r='3.1' fill='#4a4a4a'/></svg><div class='cb' style='left:745px;top:1433px'></div><svg class='i' style='left:801px;top:1438px' width='32' height='28' viewBox='0 0 32 28'><rect x='1' y='1' width='30' height='24.6' fill='#fff' stroke='#5a5d62' stroke-width='2'/><rect x='2' y='2' width='28' height='2.6' fill='#6aafe0'/><rect x='8' y='4.6' width='2' height='20' fill='#6aafe0'/><rect x='10' y='4.6' width='20' height='20' fill='#d3e8f7'/><path d='M10 4.6 H22 L20.5 8 L18 11 L15 14 L14 18 L16 21 L14.5 24.6 H10 Z' fill='#9bc49b'/><path d='M20 24.6 L21.5 22 L25 21 L30 22 V24.6 Z' fill='#9bc49b'/></svg><svg class='i' style='left:1733px;top:1439px' width='26' height='33' viewBox='0 0 26 33'><rect x='1' y='15' width='21.8' height='15.6' rx='2' fill='none' stroke='#4a4a4a' stroke-width='2'/><path d='M3.2 15 V9.5 C3.2 4 6.6 1 11.9 1 C17.2 1 20.6 4 20.6 9.5 V15 M7.1 15 V10 C7.1 6.8 9.2 5 11.9 5 C14.6 5 16.7 6.8 16.7 10 V15' fill='none' stroke='#4a4a4a' stroke-width='1.9'/><line x1='10.8' y1='18' x2='10.8' y2='28' stroke='#4a4a4a' stroke-width='1.9'/><line x1='10.8' y1='20.6' x2='13.7' y2='20.6' stroke='#4a4a4a' stroke-width='1.7'/><line x1='10.8' y1='24.1' x2='13.7' y2='24.1' stroke='#4a4a4a' stroke-width='1.7'/></svg><svg class='i' style='left:1785px;top:1439px' width='33' height='33' viewBox='0 0 33 33'><path d='M16.00 3.00 L19.26 13.01 L29.79 13.02 L21.28 19.22 L24.52 29.23 L16.00 23.05 L7.48 29.23 L10.72 19.22 L2.21 13.02 L12.74 13.01 Z' fill='none' stroke='#4a4a4a' stroke-width='1.8' stroke-linejoin='miter' stroke-miterlimit='10'/></svg><svg class='i' style='left:1838px;top:1447px' width='40' height='10' viewBox='0 0 40 10'><circle cx='7' cy='8' r='3.1' fill='#4a4a4a'/><circle cx='19' cy='8' r='3.1' fill='#4a4a4a'/><circle cx='31' cy='8' r='3.1' fill='#4a4a4a'/></svg><div class='cb' style='left:745px;top:1525px'></div><svg class='i' style='left:801px;top:1526px' width='32' height='32' viewBox='0 0 32 32'><path d='M4.3 4 L27.7 3.4 L31.9 28.9 C24 27.6 18 28.6 12 29.8 C7 30.6 3 30.2 0.1 28.6 Z' fill='#e3d152'/><path d='M15.8 23.2 L7.6 15.2 V6.6 C7.6 1.6 11.4 -1.2 15.8 -1.2 C20.2 -1.2 24 1.6 24 6.6 V15.2 Z' fill='#fff'/><path d='M15.8 20.8 L9.9 15 V6.8 C9.9 3 12.5 0.9 15.8 0.9 C19.1 0.9 21.7 3 21.7 6.8 V15 Z' fill='#cf4a1f'/><path d='M15.8 17.8 L12 14 V7.2 C12 4.6 13.6 3 15.8 3 C18 3 19.6 4.6 19.6 7.2 V14 Z' fill='#e8a08a'/><circle cx='15.8' cy='6.9' r='2.7' fill='#fff'/><rect x='16.2' y='10.5' width='1.2' height='4' fill='#c4452a'/></svg><svg class='i' style='left:1733px;top:1531px' width='26' height='33' viewBox='0 0 26 33'><rect x='1' y='15' width='21.8' height='15.6' rx='2' fill='none' stroke='#4a4a4a' stroke-width='2'/><path d='M3.2 15 V9.5 C3.2 4 6.6 1 11.9 1 C17.2 1 20.6 4 20.6 9.5 V15 M7.1 15 V10 C7.1 6.8 9.2 5 11.9 5 C14.6 5 16.7 6.8 16.7 10 V15' fill='none' stroke='#4a4a4a' stroke-width='1.9'/><line x1='10.8' y1='18' x2='10.8' y2='28' stroke='#4a4a4a' stroke-width='1.9'/><line x1='10.8' y1='20.6' x2='13.7' y2='20.6' stroke='#4a4a4a' stroke-width='1.7'/><line x1='10.8' y1='24.1' x2='13.7' y2='24.1' stroke='#4a4a4a' stroke-width='1.7'/></svg><svg class='i' style='left:1785px;top:1531px' width='33' height='33' viewBox='0 0 33 33'><path d='M16.00 3.00 L19.26 13.01 L29.79 13.02 L21.28 19.22 L24.52 29.23 L16.00 23.05 L7.48 29.23 L10.72 19.22 L2.21 13.02 L12.74 13.01 Z' fill='none' stroke='#4a4a4a' stroke-width='1.8' stroke-linejoin='miter' stroke-miterlimit='10'/></svg><svg class='i' style='left:1838px;top:1539px' width='40' height='10' viewBox='0 0 40 10'><circle cx='7' cy='8' r='3.1' fill='#4a4a4a'/><circle cx='19' cy='8' r='3.1' fill='#4a4a4a'/><circle cx='31' cy='8' r='3.1' fill='#4a4a4a'/></svg><div class='cb' style='left:745px;top:1617px'></div><svg class='i' style='left:801px;top:1618px' width='32' height='32' viewBox='0 0 32 32'><path d='M4.3 4 L27.7 3.4 L31.9 28.9 C24 27.6 18 28.6 12 29.8 C7 30.6 3 30.2 0.1 28.6 Z' fill='#e3d152'/><path d='M15.8 23.2 L7.6 15.2 V6.6 C7.6 1.6 11.4 -1.2 15.8 -1.2 C20.2 -1.2 24 1.6 24 6.6 V15.2 Z' fill='#fff'/><path d='M15.8 20.8 L9.9 15 V6.8 C9.9 3 12.5 0.9 15.8 0.9 C19.1 0.9 21.7 3 21.7 6.8 V15 Z' fill='#cf4a1f'/><path d='M15.8 17.8 L12 14 V7.2 C12 4.6 13.6 3 15.8 3 C18 3 19.6 4.6 19.6 7.2 V14 Z' fill='#e8a08a'/><circle cx='15.8' cy='6.9' r='2.7' fill='#fff'/><rect x='16.2' y='10.5' width='1.2' height='4' fill='#c4452a'/></svg><svg class='i' style='left:1733px;top:1623px' width='26' height='33' viewBox='0 0 26 33'><rect x='1' y='15' width='21.8' height='15.6' rx='2' fill='none' stroke='#4a4a4a' stroke-width='2'/><path d='M3.2 15 V9.5 C3.2 4 6.6 1 11.9 1 C17.2 1 20.6 4 20.6 9.5 V15 M7.1 15 V10 C7.1 6.8 9.2 5 11.9 5 C14.6 5 16.7 6.8 16.7 10 V15' fill='none' stroke='#4a4a4a' stroke-width='1.9'/><line x1='10.8' y1='18' x2='10.8' y2='28' stroke='#4a4a4a' stroke-width='1.9'/><line x1='10.8' y1='20.6' x2='13.7' y2='20.6' stroke='#4a4a4a' stroke-width='1.7'/><line x1='10.8' y1='24.1' x2='13.7' y2='24.1' stroke='#4a4a4a' stroke-width='1.7'/></svg><svg class='i' style='left:1785px;top:1623px' width='33' height='33' viewBox='0 0 33 33'><path d='M16.00 3.00 L19.26 13.01 L29.79 13.02 L21.28 19.22 L24.52 29.23 L16.00 23.05 L7.48 29.23 L10.72 19.22 L2.21 13.02 L12.74 13.01 Z' fill='none' stroke='#4a4a4a' stroke-width='1.8' stroke-linejoin='miter' stroke-miterlimit='10'/></svg><svg class='i' style='left:1838px;top:1631px' width='40' height='10' viewBox='0 0 40 10'><circle cx='7' cy='8' r='3.1' fill='#4a4a4a'/><circle cx='19' cy='8' r='3.1' fill='#4a4a4a'/><circle cx='31' cy='8' r='3.1' fill='#4a4a4a'/></svg><div class='cb' style='left:745px;top:1709px'></div>
<div class='t' style='left:60.60px;top:116.21px;font-size:32px;font-weight:400;color:#595959;letter-spacing:1.333px'>Home</div><div class='t' style='left:221.30px;top:116.21px;font-size:32px;font-weight:400;color:#595959;letter-spacing:0.467px'>Gallery</div><div class='t' style='left:396.50px;top:116.21px;font-size:32px;font-weight:400;color:#595959;letter-spacing:2.400px'>Map</div><div class='t' style='left:534.90px;top:116.21px;font-size:32px;font-weight:400;color:#595959;letter-spacing:-0.125px'>Scene</div><div class='t' style='left:695.80px;top:116.21px;font-size:32px;font-weight:400;color:#595959;letter-spacing:0.840px'>Groups</div><div class='t' style='left:876.20px;top:116.21px;font-size:32px;font-weight:400;color:#595959;letter-spacing:1.117px'>Content</div><div class='t' style='left:1066.00px;top:116.21px;font-size:32px;font-weight:400;color:#595959;letter-spacing:0.855px'>Organization</div><div class='t' style='left:60.00px;top:233.81px;font-size:49px;font-weight:400;color:#fff;letter-spacing:1.117px'>Content</div><div class='t' style='left:720.50px;top:242.21px;font-size:32px;font-weight:400;color:#fff;letter-spacing:0.811px'>My Content</div><div class='t' style='left:1001.10px;top:242.21px;font-size:32px;font-weight:400;color:#fff;letter-spacing:0.045px'>My Favorites</div><div class='t' style='left:1295.00px;top:242.21px;font-size:32px;font-weight:400;color:#fff;letter-spacing:0.713px'>My Groups</div><div class='t' style='left:1566.70px;top:242.21px;font-size:32px;font-weight:400;color:#fff;letter-spacing:0.679px'>My Organization</div><div class='t' style='left:1919.40px;top:242.21px;font-size:32px;font-weight:400;color:#fff;letter-spacing:0.300px'>Living Atlas</div><div class='t' style='left:183.10px;top:378.67px;font-size:28.5px;font-weight:400;color:#0079c1;letter-spacing:0.714px'>Add Item</div><div class='t' style='left:518.00px;top:378.67px;font-size:28.5px;font-weight:400;color:#0079c1;letter-spacing:0.000px'>Create</div><div class='t' style='left:821.00px;top:380.95px;font-size:29px;font-weight:400;color:#6e6e6e;letter-spacing:0.652px'>Search TZhang_mysandiego</div><div class='t' style='left:1603.00px;top:379.27px;font-size:28.5px;font-weight:400;color:#1f1f1f;letter-spacing:0.425px'>Table</div><div class='t' style='left:1772.00px;top:379.27px;font-size:28.5px;font-weight:400;color:#1f1f1f;letter-spacing:0.750px'>Date Modified</div><div class='t' style='left:2055.80px;top:379.27px;font-size:28.5px;font-weight:400;color:#005e95;letter-spacing:0.380px'>Filter</div><div class='t' style='left:60.00px;top:528.00px;font-size:30px;font-weight:700;color:#4a4a4a;letter-spacing:-0.717px'>Folders</div><div class='t' style='left:126.60px;top:610.25px;font-size:29px;font-weight:400;color:#757575;letter-spacing:0.877px'>Filter folders</div><div class='t' style='left:131.40px;top:683.69px;font-size:28px;font-weight:400;color:#4a4a4a;letter-spacing:0.477px'>All My Content</div><div class='t' style='left:130.40px;top:757.59px;font-size:28px;font-weight:400;color:#4a4a4a;letter-spacing:0.381px'>TZhang_mysandiego</div><div class='t' style='left:130.40px;top:831.49px;font-size:28px;font-weight:400;color:#4a4a4a;letter-spacing:0.717px'>app templates</div><div class='t' style='left:129.40px;top:905.39px;font-size:28px;font-weight:400;color:#4a4a4a;letter-spacing:0.560px'>BA - Application Data</div><div class='t' style='left:129.40px;top:979.29px;font-size:28px;font-weight:400;color:#4a4a4a;letter-spacing:-0.025px'>BA - Project Data</div><div class='t' style='left:130.40px;top:1053.19px;font-size:28px;font-weight:400;color:#4a4a4a;letter-spacing:0.945px'>empty folder</div><div class='t' style='left:129.40px;top:1127.09px;font-size:28px;font-weight:400;color:#4a4a4a;letter-spacing:1.300px'>Hiking</div><div class='t' style='left:60.00px;top:1307.80px;font-size:30px;font-weight:700;color:#4a4a4a;letter-spacing:-0.667px'>Filters</div><div class='t' style='left:124.70px;top:1391.30px;font-size:30px;font-weight:700;color:#4a4a4a;letter-spacing:-0.411px'>Categories</div><div class='t' style='left:124.70px;top:1464.79px;font-size:28px;font-weight:400;color:#4a4a4a;letter-spacing:0.183px'>Trending  (1)</div><div class='t' style='left:123.70px;top:1514.84px;font-size:28px;font-weight:400;color:#4a4a4a;letter-spacing:0.043px'>Basemaps</div><div class='t' style='left:122.70px;top:1564.89px;font-size:28px;font-weight:400;color:#4a4a4a;letter-spacing:0.867px'>Imagery</div><div class='t' style='left:123.70px;top:1614.94px;font-size:28px;font-weight:400;color:#4a4a4a;letter-spacing:0.533px'>Boundaries</div><div class='t' style='left:123.70px;top:1664.99px;font-size:28px;font-weight:400;color:#4a4a4a;letter-spacing:0.460px'>People</div><div class='t' style='left:721.40px;top:526.85px;font-size:29px;font-weight:400;color:#4a4a4a;letter-spacing:-0.262px'>1 - 20 of 44 in TZhang_mysandiego</div><div class='t' style='left:800.60px;top:615.05px;font-size:29px;font-weight:400;color:#323232;letter-spacing:1.475px'>Title</div><div class='t' style='left:1916.00px;top:615.45px;font-size:29px;font-weight:400;color:#0079c1;letter-spacing:2.143px'>Modified</div><div class='t' style='left:844.50px;top:700.25px;font-size:29px;font-weight:400;color:#0079c1;letter-spacing:-0.205px'>Tao's Great Testing Map</div><div class='t' style='left:1354.30px;top:700.25px;font-size:29px;font-weight:400;color:#4a4a4a;letter-spacing:0.183px'>Web Map</div><div class='t' style='left:1917.60px;top:700.25px;font-size:29px;font-weight:400;color:#4a4a4a;letter-spacing:-0.073px'>Apr 29, 2019</div><div class='t' style='left:843.50px;top:792.25px;font-size:29px;font-weight:400;color:#0079c1;letter-spacing:-0.093px'>Hiking in Southern California</div><div class='t' style='left:1353.30px;top:792.25px;font-size:29px;font-weight:400;color:#4a4a4a;letter-spacing:-0.071px'>StoryMap</div><div class='t' style='left:1917.60px;top:792.25px;font-size:29px;font-weight:400;color:#4a4a4a;letter-spacing:-0.073px'>Apr 15, 2019</div><div class='t' style='left:843.50px;top:884.25px;font-size:29px;font-weight:400;color:#0079c1;letter-spacing:-0.367px'>Paris Irrigation Lines</div><div class='t' style='left:1352.30px;top:884.25px;font-size:29px;font-weight:400;color:#4a4a4a;letter-spacing:-0.357px'>Feature Layer (hosted)</div><div class='t' style='left:1917.60px;top:884.25px;font-size:29px;font-weight:400;color:#4a4a4a;letter-spacing:-0.100px'>Apr 3, 2019</div><div class='t' style='left:843.50px;top:976.25px;font-size:29px;font-weight:400;color:#0079c1;letter-spacing:-0.292px'>Fire Hydrants</div><div class='t' style='left:1354.30px;top:976.25px;font-size:29px;font-weight:400;color:#4a4a4a;letter-spacing:0.183px'>Web Map</div><div class='t' style='left:1917.60px;top:976.25px;font-size:29px;font-weight:400;color:#4a4a4a;letter-spacing:-0.100px'>Apr 3, 2019</div><div class='t' style='left:843.50px;top:1068.25px;font-size:29px;font-weight:400;color:#0079c1;letter-spacing:-0.367px'>Paris Irrigation Lines</div><div class='t' style='left:1352.30px;top:1068.25px;font-size:29px;font-weight:400;color:#4a4a4a;letter-spacing:0.000px'>GeoJSON</div><div class='t' style='left:1916.60px;top:1068.25px;font-size:29px;font-weight:400;color:#4a4a4a;letter-spacing:-0.282px'>Jan 23, 2019</div><div class='t' style='left:844.50px;top:1160.25px;font-size:29px;font-weight:400;color:#0079c1;letter-spacing:-0.006px'>Shared bike parking</div><div class='t' style='left:1354.30px;top:1160.25px;font-size:29px;font-weight:400;color:#4a4a4a;letter-spacing:0.183px'>Web Map</div><div class='t' style='left:1915.60px;top:1160.25px;font-size:29px;font-weight:400;color:#4a4a4a;letter-spacing:-0.055px'>Dec 13, 2018</div><div class='t' style='left:843.50px;top:1252.25px;font-size:29px;font-weight:400;color:#0079c1;letter-spacing:-0.382px'>Capital BikeShare Station Locations</div><div class='t' style='left:1354.30px;top:1252.25px;font-size:29px;font-weight:400;color:#4a4a4a;letter-spacing:0.482px'>Web Mapping Application</div><div class='t' style='left:1915.60px;top:1252.25px;font-size:29px;font-weight:400;color:#4a4a4a;letter-spacing:-0.009px'>Nov 27, 2018</div><div class='t' style='left:843.50px;top:1344.25px;font-size:29px;font-weight:400;color:#0079c1;letter-spacing:-0.600px'>Capital BikeShare - Stats</div><div class='t' style='left:1352.30px;top:1344.25px;font-size:29px;font-weight:400;color:#4a4a4a;letter-spacing:-0.633px'>Feature Layer</div><div class='t' style='left:1915.60px;top:1344.25px;font-size:29px;font-weight:400;color:#4a4a4a;letter-spacing:-0.009px'>Nov 27, 2018</div><div class='t' style='left:844.50px;top:1436.25px;font-size:29px;font-weight:400;color:#0079c1;letter-spacing:-0.070px'>Shared bike parking preferences</div><div class='t' style='left:1354.30px;top:1436.25px;font-size:29px;font-weight:400;color:#4a4a4a;letter-spacing:0.482px'>Web Mapping Application</div><div class='t' style='left:1915.60px;top:1436.25px;font-size:29px;font-weight:400;color:#4a4a4a;letter-spacing:-0.009px'>Nov 27, 2018</div><div class='t' style='left:844.50px;top:1528.25px;font-size:29px;font-weight:400;color:#0079c1;letter-spacing:-0.629px'>Suicide-Rock-Trail_kml</div><div class='t' style='left:1352.30px;top:1528.25px;font-size:29px;font-weight:400;color:#4a4a4a;letter-spacing:-0.800px'>KML</div><div class='t' style='left:1916.60px;top:1528.25px;font-size:29px;font-weight:400;color:#4a4a4a;letter-spacing:-0.073px'>Oct 28, 2018</div><div class='t' style='left:844.50px;top:1620.25px;font-size:29px;font-weight:400;color:#0079c1;letter-spacing:-0.350px'>Suicide Rock Trail-track points</div><div class='t' style='left:1352.30px;top:1620.25px;font-size:29px;font-weight:400;color:#4a4a4a;letter-spacing:-0.633px'>Feature Layer</div><div class='t' style='left:1916.60px;top:1620.25px;font-size:29px;font-weight:400;color:#4a4a4a;letter-spacing:-0.073px'>Oct 28, 2018</div>
</div></div>
<div style='position:absolute;left:1px;top:1px;width:2198px;height:1708px;border:1px solid rgba(255,255,255,0.85);border-radius:9px;pointer-events:none'></div>
</body></html>
